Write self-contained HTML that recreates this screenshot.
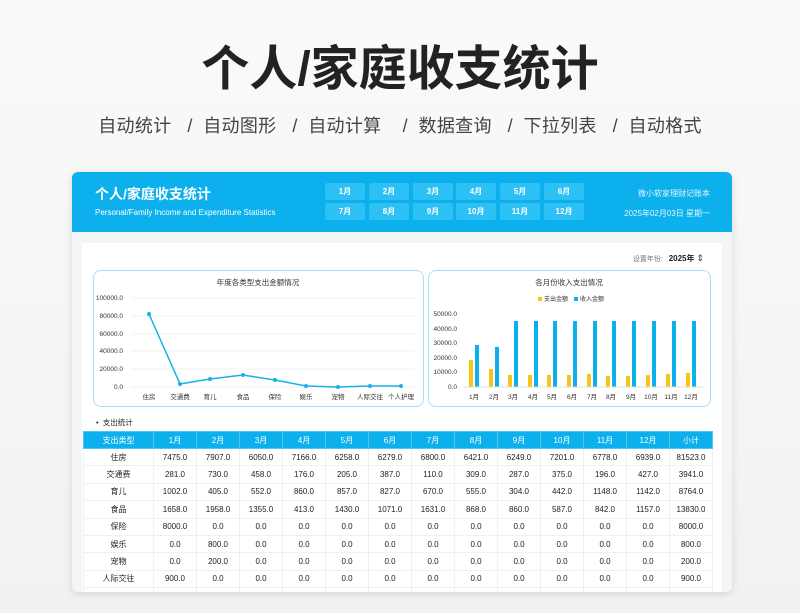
<!DOCTYPE html>
<html><head><meta charset="utf-8"><style>
*{margin:0;padding:0;box-sizing:border-box}
body{width:800px;height:613px;overflow:hidden;background:linear-gradient(#fafafa,#f0f1f3);font-family:"Liberation Sans","Noto Sans CJK SC",sans-serif;position:relative}
.t{position:absolute;left:0;width:800px;text-align:center}
.card{position:absolute;left:72px;top:172px;width:660px;height:420px;background:#f4f5f7;border-radius:6px;box-shadow:0 2px 8px rgba(0,0,0,.12);overflow:hidden}
.hd{position:absolute;left:0;top:0;width:660px;height:60px;background:#0bb0ec}
.mb{position:absolute;width:40px;height:17px;background:#2cc0f5;color:#fff;font-size:8px;font-weight:bold;text-align:center;line-height:17px;border-radius:2px}
.pn{position:absolute;left:10px;top:71px;width:640px;height:349px;background:#fff}
.box{position:absolute;border:1.5px solid #a6e0f4;border-radius:8px;background:#fff}
table{position:absolute;left:1px;top:188px;width:629px;table-layout:fixed;border-collapse:collapse;font-size:8px;color:#222}
td{height:17.4px;text-align:center;border:1px solid #eef0f2;padding:0;white-space:nowrap;overflow:hidden}
tr.h td{background:#0bb0ec;color:#fff;border-color:#4cc8f3;height:17px}
</style></head><body>
<div class="t" style="top:40px;font-size:48px;font-weight:bold;color:#222;line-height:60px">个人/家庭收支统计</div>
<div class="t" style="top:114px;font-size:18px;color:#444;line-height:24px;letter-spacing:0.3px">自动统计&nbsp;&nbsp;&nbsp;/&nbsp;&nbsp;自动图形&nbsp;&nbsp;&nbsp;/&nbsp;&nbsp;自动计算&nbsp;&nbsp;&nbsp;&nbsp;/&nbsp;&nbsp;数据查询&nbsp;&nbsp;&nbsp;/&nbsp;&nbsp;下拉列表&nbsp;&nbsp;&nbsp;/&nbsp;&nbsp;自动格式</div>
<div class="card">
<div class="hd">
<div style="position:absolute;left:23px;top:12px;color:#fff;font-size:14px;font-weight:bold">个人/家庭收支统计</div>
<div style="position:absolute;left:23px;top:36px;color:#fff;font-size:8px">Personal/Family Income and Expenditure Statistics</div>
<div style="position:absolute;right:22px;top:16px;color:#e6f7fd;font-size:8px">微小软家理财记账本</div>
<div style="position:absolute;right:22px;top:36px;color:#e6f7fd;font-size:8px">2025年02月03日 星期一</div>
<div class="mb" style="left:253px;top:11px">1月</div><div class="mb" style="left:297px;top:11px">2月</div><div class="mb" style="left:341px;top:11px">3月</div><div class="mb" style="left:384px;top:11px">4月</div><div class="mb" style="left:428px;top:11px">5月</div><div class="mb" style="left:472px;top:11px">6月</div>
<div class="mb" style="left:253px;top:31px">7月</div><div class="mb" style="left:297px;top:31px">8月</div><div class="mb" style="left:341px;top:31px">9月</div><div class="mb" style="left:384px;top:31px">10月</div><div class="mb" style="left:428px;top:31px">11月</div><div class="mb" style="left:472px;top:31px">12月</div>
</div>
<div class="pn">
<div style="position:absolute;right:18px;top:10px;font-size:7px;color:#777">设置年份: &nbsp;&nbsp;<b style="color:#222;font-size:8px">2025年</b> <span style="font-size:9px;color:#333">⇕</span></div>
<div class="box" style="left:11px;top:27px;width:331px;height:137px">
<svg width="331" height="137" style="position:absolute;left:-1px;top:-1px" font-size="7" font-family="Liberation Sans,Noto Sans CJK SC,sans-serif">
<text x="165" y="15" text-anchor="middle" font-size="7.5" fill="#333">年度各类型支出金额情况</text>
<g fill="#333" text-anchor="end" font-size="6.5"><text x="30" y="30">100000.0</text><text x="30" y="48">80000.0</text><text x="30" y="66">60000.0</text><text x="30" y="83">40000.0</text><text x="30" y="101">20000.0</text><text x="30" y="119">0.0</text></g>
<g stroke="#f0f0f0"><line x1="38" x2="322" y1="28" y2="28"/><line x1="38" x2="322" y1="46" y2="46"/><line x1="38" x2="322" y1="64" y2="64"/><line x1="38" x2="322" y1="81" y2="81"/><line x1="38" x2="322" y1="99" y2="99"/><line x1="38" x2="322" y1="117" y2="117"/></g>
<polyline fill="none" stroke="#17b2ea" stroke-width="1.5" points="56,44 87,114 117,109 150,105 182,110 213,116 245,117 277,116 308,116"/>
<g fill="#17b2ea"><circle cx="56" cy="44" r="2"/><circle cx="87" cy="114" r="2"/><circle cx="117" cy="109" r="2"/><circle cx="150" cy="105" r="2"/><circle cx="182" cy="110" r="2"/><circle cx="213" cy="116" r="2"/><circle cx="245" cy="117" r="2"/><circle cx="277" cy="116" r="2"/><circle cx="308" cy="116" r="2"/></g>
<g fill="#333" text-anchor="middle" font-size="6.5"><text x="56" y="129">住房</text><text x="87" y="129">交通费</text><text x="117" y="129">育儿</text><text x="150" y="129">食品</text><text x="182" y="129">保险</text><text x="213" y="129">娱乐</text><text x="245" y="129">宠物</text><text x="277" y="129">人际交往</text><text x="308" y="129">个人护理</text></g>
</svg></div>
<div class="box" style="left:346px;top:27px;width:283px;height:137px">
<svg width="283" height="137" style="position:absolute;left:-1px;top:-1px" font-family="Liberation Sans,Noto Sans CJK SC,sans-serif">
<text x="141" y="15" text-anchor="middle" font-size="7.5" fill="#333">各月份收入支出情况</text>
<rect x="110" y="27" width="4" height="4" fill="#f5c518"/><text x="116" y="31" font-size="6" fill="#333">支出金额</text>
<rect x="146" y="27" width="4" height="4" fill="#0bb0ec"/><text x="152" y="31" font-size="6" fill="#333">收入金额</text>
<g fill="#333" text-anchor="end" font-size="6.5"><text x="29" y="46">50000.0</text><text x="29" y="61">40000.0</text><text x="29" y="75">30000.0</text><text x="29" y="90">20000.0</text><text x="29" y="104">10000.0</text><text x="29" y="119">0.0</text></g>
<g>
<rect x="41" y="90" width="4" height="27" fill="#f5c518"/><rect x="47" y="75" width="4" height="42" fill="#0bb0ec"/>
<rect x="61" y="99" width="4" height="18" fill="#f5c518"/><rect x="67" y="77" width="4" height="40" fill="#0bb0ec"/>
<rect x="80" y="105" width="4" height="12" fill="#f5c518"/><rect x="86" y="51" width="4" height="66" fill="#0bb0ec"/>
<rect x="100" y="105" width="4" height="12" fill="#f5c518"/><rect x="106" y="51" width="4" height="66" fill="#0bb0ec"/>
<rect x="119" y="105" width="4" height="12" fill="#f5c518"/><rect x="125" y="51" width="4" height="66" fill="#0bb0ec"/>
<rect x="139" y="105" width="4" height="12" fill="#f5c518"/><rect x="145" y="51" width="4" height="66" fill="#0bb0ec"/>
<rect x="159" y="104" width="4" height="13" fill="#f5c518"/><rect x="165" y="51" width="4" height="66" fill="#0bb0ec"/>
<rect x="178" y="106" width="4" height="11" fill="#f5c518"/><rect x="184" y="51" width="4" height="66" fill="#0bb0ec"/>
<rect x="198" y="106" width="4" height="11" fill="#f5c518"/><rect x="204" y="51" width="4" height="66" fill="#0bb0ec"/>
<rect x="218" y="105" width="4" height="12" fill="#f5c518"/><rect x="224" y="51" width="4" height="66" fill="#0bb0ec"/>
<rect x="238" y="104" width="4" height="13" fill="#f5c518"/><rect x="244" y="51" width="4" height="66" fill="#0bb0ec"/>
<rect x="258" y="103" width="4" height="14" fill="#f5c518"/><rect x="264" y="51" width="4" height="66" fill="#0bb0ec"/>
</g>
<line x1="36" x2="275" y1="117" y2="117" stroke="#ddd"/>
<g fill="#333" text-anchor="middle" font-size="6.5"><text x="46" y="129">1月</text><text x="66" y="129">2月</text><text x="85" y="129">3月</text><text x="105" y="129">4月</text><text x="124" y="129">5月</text><text x="144" y="129">6月</text><text x="164" y="129">7月</text><text x="183" y="129">8月</text><text x="203" y="129">9月</text><text x="223" y="129">10月</text><text x="243" y="129">11月</text><text x="263" y="129">12月</text></g>
</svg></div>
<div style="position:absolute;left:14px;top:174px;font-size:7.5px;color:#222">• &nbsp;支出统计</div>
<table>
<colgroup><col style="width:70px"><col style="width:43px"><col style="width:43px"><col style="width:43px"><col style="width:43px"><col style="width:43px"><col style="width:43px"><col style="width:43px"><col style="width:43px"><col style="width:43px"><col style="width:43px"><col style="width:43px"><col style="width:43px"><col style="width:43px"></colgroup>
<tr class="h"><td>支出类型</td><td>1月</td><td>2月</td><td>3月</td><td>4月</td><td>5月</td><td>6月</td><td>7月</td><td>8月</td><td>9月</td><td>10月</td><td>11月</td><td>12月</td><td>小计</td></tr>
<tr><td>住房</td><td>7475.0</td><td>7907.0</td><td>6050.0</td><td>7166.0</td><td>6258.0</td><td>6279.0</td><td>6800.0</td><td>6421.0</td><td>6249.0</td><td>7201.0</td><td>6778.0</td><td>6939.0</td><td>81523.0</td></tr>
<tr><td>交通费</td><td>281.0</td><td>730.0</td><td>458.0</td><td>176.0</td><td>205.0</td><td>387.0</td><td>110.0</td><td>309.0</td><td>287.0</td><td>375.0</td><td>196.0</td><td>427.0</td><td>3941.0</td></tr>
<tr><td>育儿</td><td>1002.0</td><td>405.0</td><td>552.0</td><td>860.0</td><td>857.0</td><td>827.0</td><td>670.0</td><td>555.0</td><td>304.0</td><td>442.0</td><td>1148.0</td><td>1142.0</td><td>8764.0</td></tr>
<tr><td>食品</td><td>1658.0</td><td>1958.0</td><td>1355.0</td><td>413.0</td><td>1430.0</td><td>1071.0</td><td>1631.0</td><td>868.0</td><td>860.0</td><td>587.0</td><td>842.0</td><td>1157.0</td><td>13830.0</td></tr>
<tr><td>保险</td><td>8000.0</td><td>0.0</td><td>0.0</td><td>0.0</td><td>0.0</td><td>0.0</td><td>0.0</td><td>0.0</td><td>0.0</td><td>0.0</td><td>0.0</td><td>0.0</td><td>8000.0</td></tr>
<tr><td>娱乐</td><td>0.0</td><td>800.0</td><td>0.0</td><td>0.0</td><td>0.0</td><td>0.0</td><td>0.0</td><td>0.0</td><td>0.0</td><td>0.0</td><td>0.0</td><td>0.0</td><td>800.0</td></tr>
<tr><td>宠物</td><td>0.0</td><td>200.0</td><td>0.0</td><td>0.0</td><td>0.0</td><td>0.0</td><td>0.0</td><td>0.0</td><td>0.0</td><td>0.0</td><td>0.0</td><td>0.0</td><td>200.0</td></tr>
<tr><td>人际交往</td><td>900.0</td><td>0.0</td><td>0.0</td><td>0.0</td><td>0.0</td><td>0.0</td><td>0.0</td><td>0.0</td><td>0.0</td><td>0.0</td><td>0.0</td><td>0.0</td><td>900.0</td></tr>
<tr><td></td><td></td><td></td><td></td><td></td><td></td><td></td><td></td><td></td><td></td><td></td><td></td><td></td><td></td></tr>
</table>
</div></div>
</body></html>
